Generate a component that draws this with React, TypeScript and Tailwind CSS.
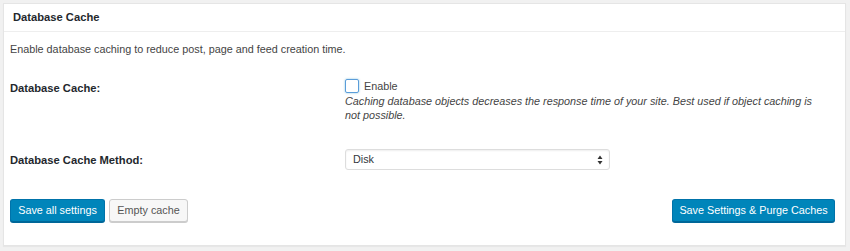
export default function App() {
  return (
    <div className="h-[251px] w-[850px] bg-[#f1f1f1] pt-[3px] pl-[3px] pr-[4px] pb-[5px] font-['Liberation_Sans',Arial,sans-serif] text-[#23282d]">
      <div className="flex h-full flex-col border border-[#e5e5e5] bg-white shadow-[0_1px_1px_rgba(0,0,0,0.04)]">
        {/* header */}
        <div className="flex h-[28px] items-center border-b border-[#eeeeee] pl-[9px]">
          <h2 className="text-[11.2px] font-bold">Database Cache</h2>
        </div>

        <div className="flex flex-1 flex-col px-[6px]">
          <p className="mt-[10px] text-[10.8px] leading-[14px] text-[#444]">
            Enable database caching to reduce post, page and feed creation time.
          </p>

          <div className="mt-[23px] grid grid-cols-[335px_1fr]">
            <div className="pt-[2px] text-[11.2px] font-bold leading-[14px]">Database Cache:</div>
            <div>
              <label className="flex items-center gap-[5px] text-[10.8px] leading-[14px] text-[#444]">
                <span className="inline-block h-[14px] w-[14px] rounded-[2px] border border-[#5b9dd9] shadow-[0_0_2px_rgba(30,140,190,0.6)]" />
                Enable
              </label>
              <p className="mt-[1px] w-[478px] text-[10.8px] italic leading-[14px] text-[#444]">
                Caching database objects decreases the response time of your site. Best used if object caching is
                not possible.
              </p>
            </div>
          </div>

          <div className="mt-[27px] grid grid-cols-[335px_1fr] items-center">
            <div className="text-[11.2px] font-bold leading-[14px]">Database Cache Method:</div>
            <div className="flex h-[21px] w-[265px] items-center justify-between rounded-[3px] border border-[#dddddd] bg-white pl-[7px] pr-[6px] shadow-[inset_0_1px_2px_rgba(0,0,0,0.07)]">
              <span className="text-[10.8px] text-[#32373c]">Disk</span>
              <svg width="6" height="10" viewBox="0 0 6 10">
                <path d="M3 0.5L5.5 4H0.5Z M3 9.5L5.5 6H0.5Z" fill="#333" />
              </svg>
            </div>
          </div>

          <div className="mt-[29px] flex items-center">
            <button className="h-[23px] w-[95px] rounded-[3px] border border-[#0073aa] border-b-[#006799] bg-[#0085ba] text-[10.8px] text-white shadow-[0_1px_0_#006799]">
              Save all settings
            </button>
            <button className="ml-[4px] h-[23px] w-[79px] rounded-[3px] border border-[#cccccc] bg-[#f7f7f7] text-[10.8px] text-[#555] shadow-[0_1px_0_#cccccc]">
              Empty cache
            </button>
            <button className="ml-auto mr-[4px] h-[23px] w-[163px] rounded-[3px] border border-[#0073aa] border-b-[#006799] bg-[#0085ba] text-[10.8px] text-white shadow-[0_1px_0_#006799]">
              Save Settings &amp; Purge Caches
            </button>
          </div>
        </div>
      </div>
    </div>
  );
}
